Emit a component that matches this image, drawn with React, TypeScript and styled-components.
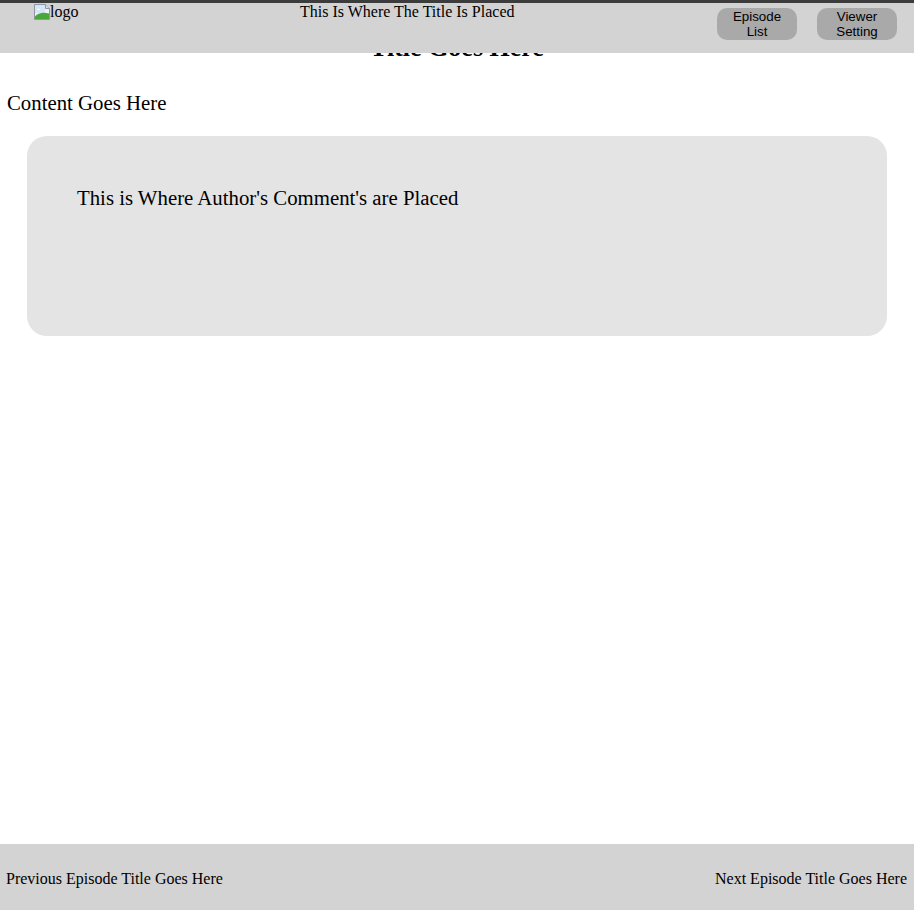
import React from "react";
import styled, { createGlobalStyle } from "styled-components";

const Global = createGlobalStyle`
  html, body { margin: 0; padding: 0; background: #fff; }
  body { font-family: "Liberation Serif", "Times New Roman", serif; color: #000; }
`;

const Header = styled.header`
  position: fixed;
  top: 0;
  left: 0;
  right: 0;
  z-index: 10;
  height: 50px;
  border-top: 3px solid #3c3c3c;
  background: #d3d3d3;
  display: grid;
  grid-template-columns: 266px auto 1fr auto;
  align-items: start;
  padding: 0 17px 0 34px;
  font-size: 16px;
  line-height: 18px;
`;

const Logo = styled.div`
  display: flex;
  align-items: center;
  height: 18px;
`;

const HeaderTitle = styled.div`
  white-space: nowrap;
`;

const ButtonGroup = styled.div`
  grid-column: 4;
  display: flex;
  gap: 20px;
  margin-top: 5px;
`;

const NavButton = styled.button`
  width: 80px;
  height: 32px;
  border: none;
  border-radius: 10px;
  background: #a9a9a9;
  color: #000;
  font-family: "Liberation Sans", Arial, sans-serif;
  font-size: 13.33px;
  line-height: 15px;
  padding: 1px 6px;
`;

const Main = styled.main`
  padding: 33px 7px 120px;
  font-size: 20.8px;
`;

const PageTitle = styled.h2`
  margin: 0;
  text-align: center;
  font-size: 26px;
  font-weight: bold;
  line-height: 30px;
`;

const ContentText = styled.p`
  margin: 27.5px 0 0;
  line-height: 24px;
`;

const CommentBox = styled.section`
  margin: 21.5px 20px 0;
  height: 200px;
  box-sizing: border-box;
  padding: 49.5px 50px;
  background: #e4e4e4;
  border-radius: 20px;
  line-height: 24px;
`;

const Footer = styled.footer`
  position: fixed;
  left: 0;
  right: 0;
  bottom: 0;
  height: 66px;
  box-sizing: border-box;
  background: #d3d3d3;
  display: flex;
  align-items: flex-start;
  justify-content: space-between;
  padding: 26px 7px 0 6px;
  font-size: 16px;
  line-height: 18px;
`;

const BrokenImage = () => (
  <svg width="16" height="16" viewBox="0 0 16 16">
    <path d="M0.5 0.5h11l4 4v11h-15z" fill="#eef2f6" stroke="#8e98a3" />
    <path d="M11.5 0.5v4h4" fill="#d8dee4" stroke="#8e98a3" />
    <rect x="1" y="1" width="10" height="8" fill="#d4e6f7" />
    <path d="M1 15V12.5c3-3.5 8-4.5 14-3V15z" fill="#4aa83a" />
    <path d="M3 6a1.6 1.6 0 1 1 3.2 0z" fill="#fff" />
  </svg>
);

export default function App() {
  return (
    <>
      <Global />
      <Header>
        <Logo>
          <BrokenImage />
          <span>logo</span>
        </Logo>
        <HeaderTitle>This Is Where The Title Is Placed</HeaderTitle>
        <ButtonGroup>
          <NavButton>Episode List</NavButton>
          <NavButton>Viewer Setting</NavButton>
        </ButtonGroup>
      </Header>
      <Main>
        <PageTitle>Title Goes Here</PageTitle>
        <ContentText>Content Goes Here</ContentText>
        <CommentBox>This is Where Author's Comment's are Placed</CommentBox>
      </Main>
      <Footer>
        <span>Previous Episode Title Goes Here</span>
        <span>Next Episode Title Goes Here</span>
      </Footer>
    </>
  );
}
